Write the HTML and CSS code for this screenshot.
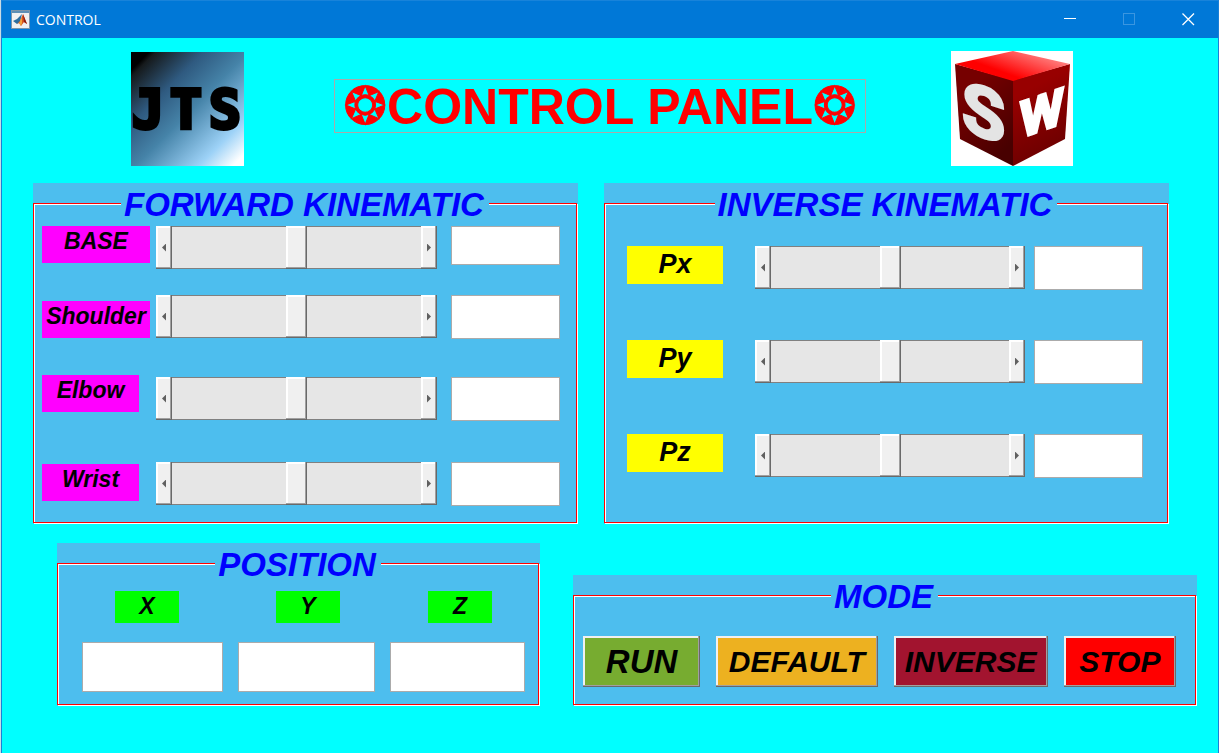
FILE: index.html
```html
<!DOCTYPE html>
<html lang="en">
<head>
<meta charset="utf-8">
<title>CONTROL</title>
<link rel="stylesheet" href="styles.css">
</head>
<body>
<div class="window">
  <div class="titlebar">
    <svg class="app-icon" width="19" height="19" viewBox="0 0 19 19" aria-hidden="true">
      <rect x="0.500" y="0.500" width="18" height="18" fill="#f1f1f1" stroke="#7d95a8"/>
      <rect x="1" y="1" width="17" height="2" fill="#5d8fb5"/>
      <path d="M2 11 L6 9 L11 4 L9 12 L6 14Z" fill="#2d6f9f"/>
      <path d="M6 14 L9 11 L12 4 L16 14 L13 12 L10 16 L8 13Z" fill="#d9541e"/>
      <path d="M12 4 L16 14 L13 12Z" fill="#8c1c12"/>
      <path d="M9 11 L11 7 L11 13 L10 16 L8 13Z" fill="#f2a33a"/>
    </svg>
    <span class="caption">CONTROL</span>
    <div class="window-buttons">
      <button type="button" aria-label="Minimize"><svg width="13" height="13" viewBox="0 0 13 13"><path d="M0 5.500H12" stroke="#fff"/></svg></button>
      <button type="button" aria-label="Maximize" disabled><svg width="13" height="13" viewBox="0 0 13 13"><rect x="0.500" y="0.500" width="11" height="11" fill="none" stroke="#3a96e0"/></svg></button>
      <button type="button" aria-label="Close"><svg width="13" height="13" viewBox="0 0 13 13"><path d="M0.500 0.500L12 12M12 0.500L0.500 12" stroke="#fff" stroke-width="1.300"/></svg></button>
    </div>
  </div>

  <header class="banner">
    <svg class="logo-jts" viewBox="0 0 113 114" role="img" aria-label="JTS">
      <defs>
        <linearGradient id="sky" x1="0" y1="0" x2="1" y2="1">
          <stop offset="0.080" stop-color="#000"/>
          <stop offset="0.110" stop-color="#161a1c"/>
          <stop offset="0.320" stop-color="#2f5a80"/>
          <stop offset="0.520" stop-color="#4583a8"/>
          <stop offset="0.800" stop-color="#9dd2f7"/>
          <stop offset="0.950" stop-color="#fff"/>
        </linearGradient>
      </defs>
      <rect width="113" height="114" fill="url(#sky)"/>
      <text class="jts-letters" x="1 39 78" y="76">JTS</text>
    </svg>
    <h1 class="title"><span class="star">❂</span>CONTROL PANEL<span class="star">❂</span></h1>
    <svg class="logo-sw" viewBox="0 0 122 115" role="img" aria-label="SW">
      <defs>
        <linearGradient id="lid" x1="0.200" y1="0.700" x2="0.900" y2="0.200">
          <stop offset="0.200" stop-color="#f00"/><stop offset="1" stop-color="#ff8a8a"/>
        </linearGradient>
        <linearGradient id="left-face" x1="0" y1="0" x2="0.600" y2="1">
          <stop offset="0.300" stop-color="#760000"/><stop offset="1" stop-color="#480000"/>
        </linearGradient>
        <linearGradient id="right-face" x1="0" y1="0" x2="0.300" y2="1">
          <stop offset="0.300" stop-color="#980000"/><stop offset="1" stop-color="#6c0000"/>
        </linearGradient>
      </defs>
      <rect width="122" height="115" fill="#fff"/>
      <path d="M4 13L62 29V115L9 88Z" fill="url(#left-face)"/>
      <path d="M119 13L62 29V115L114 88Z" fill="url(#right-face)"/>
      <path d="M4 13L62 0L119 13L62 30Z" fill="url(#lid)"/>
      <text class="s-letter" transform="translate(11 79) skewY(18)">S</text>
      <text class="w-letter" transform="translate(69 87) skewY(-19)">W</text>
    </svg>
  </header>

  <main>
    <div class="kinematics">
      <section class="panel">
        <fieldset class="group">
          <legend>FORWARD KINEMATIC</legend>
          <div class="controls forward">
            <div class="tags">
              <label class="tag joint wide" for="base">BASE</label>
              <label class="tag joint wide" for="shoulder">Shoulder</label>
              <label class="tag joint" for="elbow">Elbow</label>
              <label class="tag joint" for="wrist">Wrist</label>
            </div>
            <div class="rows">
              <div class="slider"><button type="button" class="step back" aria-label="Decrease base"></button><input type="range" id="base"><button type="button" class="step next" aria-label="Increase base"></button></div>
              <div class="slider"><button type="button" class="step back" aria-label="Decrease shoulder"></button><input type="range" id="shoulder"><button type="button" class="step next" aria-label="Increase shoulder"></button></div>
              <div class="slider"><button type="button" class="step back" aria-label="Decrease elbow"></button><input type="range" id="elbow"><button type="button" class="step next" aria-label="Increase elbow"></button></div>
              <div class="slider"><button type="button" class="step back" aria-label="Decrease wrist"></button><input type="range" id="wrist"><button type="button" class="step next" aria-label="Increase wrist"></button></div>
            </div>
            <div class="rows">
              <input type="text" class="value short" aria-label="Base value">
              <input type="text" class="value" aria-label="Shoulder value">
              <input type="text" class="value" aria-label="Elbow value">
              <input type="text" class="value" aria-label="Wrist value">
            </div>
          </div>
        </fieldset>
      </section>

      <section class="panel">
        <fieldset class="group">
          <legend>INVERSE KINEMATIC</legend>
          <div class="controls inverse">
            <div class="rows">
              <label class="tag point" for="px">Px</label>
              <label class="tag point" for="py">Py</label>
              <label class="tag point" for="pz">Pz</label>
            </div>
            <div class="rows">
              <div class="slider"><button type="button" class="step back" aria-label="Decrease Px"></button><input type="range" id="px"><button type="button" class="step next" aria-label="Increase Px"></button></div>
              <div class="slider"><button type="button" class="step back" aria-label="Decrease Py"></button><input type="range" id="py"><button type="button" class="step next" aria-label="Increase Py"></button></div>
              <div class="slider"><button type="button" class="step back" aria-label="Decrease Pz"></button><input type="range" id="pz"><button type="button" class="step next" aria-label="Increase Pz"></button></div>
            </div>
            <div class="rows">
              <input type="text" class="value" aria-label="Px value">
              <input type="text" class="value" aria-label="Py value">
              <input type="text" class="value" aria-label="Pz value">
            </div>
          </div>
        </fieldset>
      </section>
    </div>

    <div class="lower">
      <section class="panel">
        <fieldset class="group">
          <legend>POSITION</legend>
          <div class="axis-tags">
            <label class="tag axis" for="x">X</label>
            <label class="tag axis" for="y">Y</label>
            <label class="tag axis" for="z">Z</label>
          </div>
          <div class="axis-values">
            <input type="text" class="value" id="x">
            <input type="text" class="value" id="y">
            <input type="text" class="value" id="z">
          </div>
        </fieldset>
      </section>

      <section class="panel">
        <fieldset class="group">
          <legend>MODE</legend>
          <div class="modes">
            <button type="button" class="mode run">RUN</button>
            <button type="button" class="mode default">DEFAULT</button>
            <button type="button" class="mode invert">INVERSE</button>
            <button type="button" class="mode stop">STOP</button>
          </div>
        </fieldset>
      </section>
    </div>
  </main>
</div>
</body>
</html>
```
FILE: styles.css
```css
* { box-sizing: border-box; }

body {
  margin: 0;
  padding-left: 1px;
  background: #c8dce4;
  font-family: "Liberation Sans", Arial, sans-serif;
}

.window {
  min-height: 100vh;
  border: solid #1a7fd6;
  border-width: 0 1px;
  background: #0ff;
}

/* Title bar */
.titlebar {
  display: flex;
  align-items: center;
  height: 38px;
  padding-left: 9px;
  border-top: 1px solid #1883da;
  background: #0078d7;
}

.app-icon { flex: none; }

.caption {
  margin-left: 6px;
  color: #fff;
  font: 14px/20px "Open Sans", "Noto Sans", sans-serif;
}

.window-buttons {
  display: flex;
  margin-left: auto;
}

.window-buttons button {
  display: flex;
  align-items: center;
  justify-content: center;
  width: 59px;
  height: 36px;
  padding: 0;
  border: 0;
  background: none;
}

/* Logos and heading */
.banner {
  display: grid;
  grid-template-columns: 129fr 113px 90fr 532px 85fr 122px 145fr;
  align-items: center;
  padding-top: 13px;
}

.logo-jts { grid-column: 2; width: 113px; height: 114px; }
.logo-sw { grid-column: 6; width: 122px; height: 115px; }

.jts-letters {
  font: bold 53px "DejaVu Sans Mono", monospace;
  stroke: #000;
  stroke-width: 4px;
}

.s-letter {
  font: bold 70px Roboto, sans-serif;
  fill: #e4e4e4;
  stroke: #e4e4e4;
  stroke-width: 3px;
}

.w-letter {
  font: bold 50px Roboto, sans-serif;
  fill: #fff;
  stroke: #fff;
  stroke-width: 3px;
}

.title {
  grid-column: 4;
  align-self: start;
  height: 54px;
  margin: 28px 0 0;
  border: 1px solid #a9a9a9;
  color: #f00;
  font-size: 50px;
  line-height: 54px;
  text-align: center;
  white-space: nowrap;
}

.star {
  font-family: "DejaVu Sans", sans-serif;
  font-size: 52px;
  font-weight: normal;
  line-height: 50px;
  -webkit-text-stroke: 1px #f00;
}

/* Panels */
.kinematics {
  display: grid;
  grid-template-columns: 545fr 565fr;
  gap: 26px;
  padding: 17px 49px 0 31px;
}

.lower {
  display: grid;
  grid-template-columns: 483fr 624fr;
  align-items: end;
  gap: 33px;
  padding: 19px 21px 0 55px;
}

.panel {
  display: grid;
  padding: 0 1px 1px 0;
  background: #4dbeee;
}

.group {
  min-width: 0;
  margin: 0;
  padding: 0;
  border: 1px solid #f00;
  box-shadow: 1px 1px #fff, inset 1px 1px #fff;
}

legend {
  margin: 0 auto;
  padding: 3px 5px 0 3px;
  background: #4dbeee;
  color: #00f;
  font-size: 33px;
  font-style: italic;
  font-weight: bold;
  line-height: 38px;
}

.controls { display: grid; }

.forward {
  grid-template-columns: 108px 1fr 109px;
  padding: 2px 16px 16px 8px;
}

.forward .rows {
  display: grid;
  grid-template-rows: 69px 82px 85px 44px;
  align-items: start;
}

.forward .rows:nth-child(2) { margin: 0 14px 0 6px; }

.tags {
  display: grid;
  grid-template-rows: 75px 74px 89px 38px;
  align-items: start;
  justify-items: start;
}

.inverse {
  grid-template-columns: 96px 1fr 109px;
  padding: 22px 24px 0 22px;
}

.inverse .rows {
  display: grid;
  grid-template-rows: 94px 94px 44px;
  align-items: start;
}

.inverse .rows:nth-child(2) { margin: 0 9px 0 32px; }

.tag {
  color: #000;
  font-size: 23px;
  font-style: italic;
  font-weight: bold;
  text-align: center;
}

.joint {
  width: 97px;
  height: 37px;
  background: #f0f;
  line-height: 30px;
}

.joint.wide { width: 108px; }

.point {
  height: 38px;
  background: #ff0;
  font-size: 27px;
  line-height: 36px;
}

.axis {
  width: 64px;
  height: 32px;
  background: #0f0;
  line-height: 30px;
}

.value {
  width: 100%;
  min-width: 0;
  height: 44px;
  padding: 0 6px;
  border: 1px solid #ababab;
  border-radius: 0;
  background: #fff;
  font-size: 23px;
}

.value.short { height: 39px; }

/* Scroll-bar style sliders */
.slider {
  display: flex;
  height: 43px;
}

.slider input {
  flex: 1;
  min-width: 0;
  height: 43px;
  margin: 0;
  border: solid #808080;
  border-width: 1px 0;
  background: #e6e6e6;
  appearance: none;
}

.slider input::-webkit-slider-thumb {
  width: 21px;
  height: 43px;
  border: 0;
  border-radius: 0;
  background: #f0f0f0;
  box-shadow: inset -1px -1px #696969, inset -2px -2px #a0a0a0, inset 2px 2px #fff;
  appearance: none;
}

.step {
  display: flex;
  align-items: center;
  justify-content: center;
  flex: none;
  width: 16px;
  padding: 0;
  border: 0;
  background: #f0f0f0;
  box-shadow: inset -1px -1px #696969, inset -2px -2px #a0a0a0, inset 2px 2px #fff;
}

.step::before {
  width: 4px;
  height: 8px;
  background: #606060;
  content: "";
}

.back::before { clip-path: polygon(100% 0, 100% 100%, 0 50%); }
.next::before { clip-path: polygon(0 0, 100% 50%, 0 100%); }

/* Position */
.axis-tags {
  display: grid;
  grid-template-columns: 161fr 152fr 64px;
  padding: 7px 46px 0 57px;
}

.axis-values {
  display: grid;
  grid-template-columns: 141fr 138fr 135fr;
  gap: 15px;
  padding: 19px 13px 12px 24px;
}

.axis-values .value { height: 50px; }

/* Mode buttons */
.modes {
  display: grid;
  grid-template-columns: 117fr 161fr 154fr 112fr;
  gap: 16px;
  padding: 20px 19px 17px 9px;
}

.mode {
  height: 51px;
  padding: 0;
  border: 0;
  box-shadow: inset -1px -1px #696969, inset -2px -2px #a0a0a0, inset 2px 2px #f0f0f0;
  color: #000;
  font: italic bold 30px/48px "Liberation Sans", Arial, sans-serif;
}

.run { background: #77ac30; font-size: 33px; }
.default { background: #edb120; }
.invert { background: #a2142f; }
.stop { background: #f00; }
```
